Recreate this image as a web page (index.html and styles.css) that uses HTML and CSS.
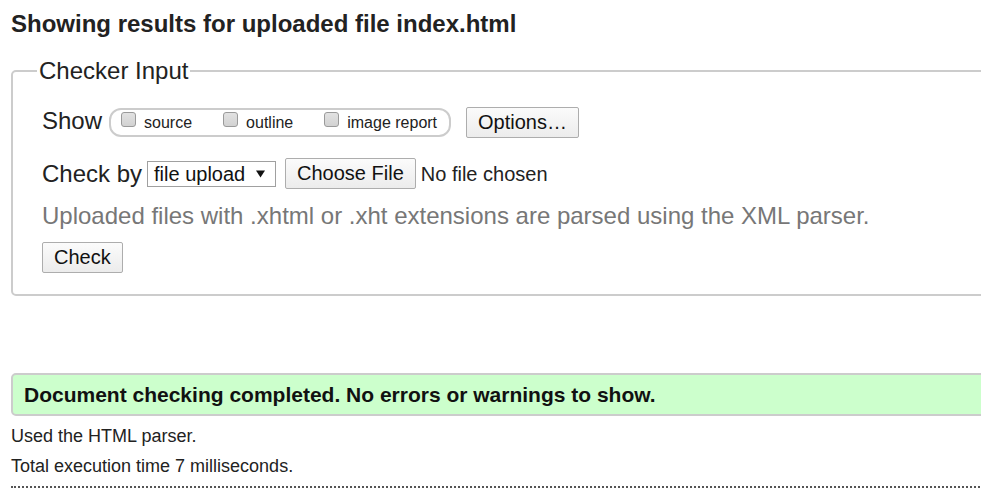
FILE: index.html
```html
<!DOCTYPE html>
<html lang="en">
<head>
<meta charset="utf-8">
<title>Showing results for uploaded file index.html</title>
<link rel="stylesheet" href="styles.css">
</head>
<body>
<div class="page">
  <h1 class="title">Showing results for uploaded file index.html</h1>
  <form class="checker">
    <fieldset class="checker-input">
      <legend class="legend">Checker Input</legend>
      <div class="rows">
        <div class="row">
          <span class="row-label row-label-show">Show</span>
          <div class="group">
            <label class="opt"><span class="box"></span><span>source</span></label>
            <label class="opt"><span class="box"></span><span>outline</span></label>
            <label class="opt"><span class="box"></span><span>image report</span></label>
          </div>
          <button type="button" class="btn btn-options">Options…</button>
        </div>
        <div class="row">
          <span class="row-label">Check by</span>
          <span class="select">file upload<svg class="caret" width="9" height="8" viewBox="0 0 9 8"><path d="M0 0.5H9L4.5 7.5Z" fill="#111"/></svg></span>
          <button type="button" class="btn btn-file">Choose File</button>
          <span class="file-name">No file chosen</span>
        </div>
        <p class="hint">Uploaded files with .xhtml or .xht extensions are parsed using the XML parser.</p>
        <div class="row-check">
          <button type="button" class="btn">Check</button>
        </div>
      </div>
    </fieldset>
  </form>
  <div class="success">Document checking completed. No errors or warnings to show.</div>
  <div class="details">
    <p class="detail">Used the HTML parser.</p>
    <p class="detail">Total execution time 7 milliseconds.</p>
  </div>
</div>
</body>
</html>
```
FILE: styles.css
```css
html {
  overflow: hidden;
  background: #fff;
}
body {
  margin: 0;
  padding: 0 0 0 11px;
  font-family: "Liberation Sans", Arial, sans-serif;
  color: #222;
}
.page {
  width: 1060px;
}
.title {
  margin: 10px 0 19px;
  font-size: 24px;
  line-height: 28px;
  font-weight: bold;
  color: #222;
}
.checker {
  margin: 0;
}
.checker-input {
  margin: 0;
  border: 2px solid #ccc;
  border-radius: 5px;
  padding: 0 0 0 29px;
  min-width: 0;
}
.legend {
  font-size: 24px;
  line-height: 28px;
  padding: 0 2px;
  margin-left: -5px;
  color: #222;
}
.rows {
  display: flex;
  flex-direction: column;
  padding: 21px 0 21px;
}
.row {
  display: flex;
  align-items: center;
  height: 33px;
}
.row + .row {
  margin-top: 18px;
}
.row-label {
  font-size: 24px;
  line-height: 28px;
  color: #222;
  margin-right: 5px;
}
.row-label-show {
  margin-top: -3px;
  margin-right: 7px;
}
.group {
  display: flex;
  align-items: center;
  gap: 31px;
  box-sizing: border-box;
  height: 29px;
  border: 2px solid #ccc;
  border-radius: 12px;
  padding: 0 12px 0 10px;
}
.opt {
  display: flex;
  align-items: center;
  gap: 8px;
  font-size: 16px;
  line-height: 18px;
  color: #222;
}
.box {
  display: inline-block;
  box-sizing: border-box;
  width: 15px;
  height: 15px;
  margin-bottom: 6px;
  border: 1px solid #9a9a9a;
  border-radius: 3px;
  background: linear-gradient(#e2e2e2, #d2d2d2);
}
.btn {
  box-sizing: border-box;
  height: 31px;
  padding: 0 11px;
  border: 1px solid #adadad;
  border-radius: 2px;
  background: linear-gradient(#fbfbfb, #ececec);
  font-family: "Liberation Sans", Arial, sans-serif;
  font-size: 20px;
  line-height: 29px;
  color: #111;
}
.btn-options {
  margin-left: 15px;
}
.select {
  display: flex;
  align-items: center;
  box-sizing: border-box;
  height: 26px;
  width: 129px;
  padding: 0 10px 0 6px;
  border: 1px solid #a0a0a0;
  font-size: 20px;
  line-height: 24px;
  color: #111;
  background: #fff;
  justify-content: space-between;
}
.caret {
  display: block;
}
.btn-file {
  margin-left: 9px;
}
.file-name {
  margin-left: 5px;
  font-size: 20px;
  line-height: 24px;
  color: #222;
}
.hint {
  margin: 12px 0 0;
  font-size: 24px;
  line-height: 28px;
  color: #777;
}
.row-check {
  display: flex;
  margin-top: 12px;
}
.success {
  margin-top: 77px;
  box-sizing: border-box;
  height: 43px;
  padding: 0 11px;
  border: 2px solid #ccc;
  border-radius: 5px;
  background: #ccffcc;
  font-size: 21px;
  line-height: 39px;
  font-weight: bold;
  color: #111;
}
.details {
  margin-top: 5px;
  padding-bottom: 5px;
  border-bottom: 2px dotted #555;
}
.detail {
  margin: 0;
  font-size: 18px;
  line-height: 30px;
  color: #222;
}
```
